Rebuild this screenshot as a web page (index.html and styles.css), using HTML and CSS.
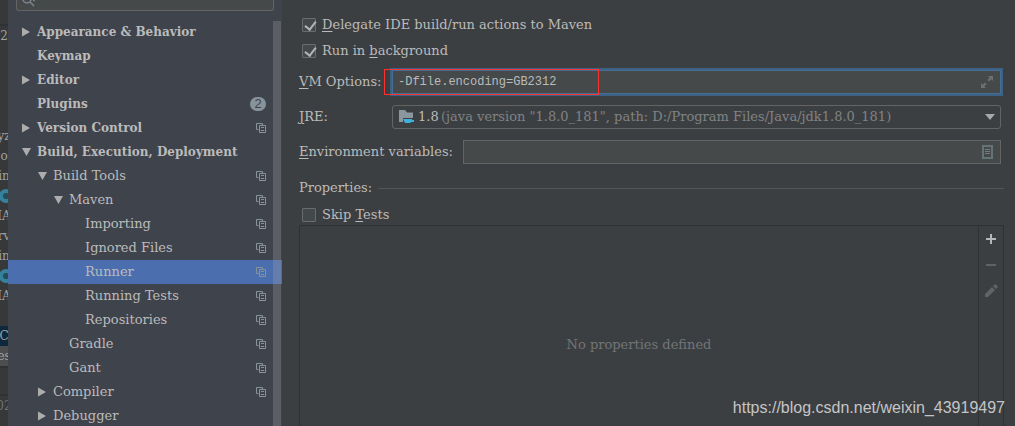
FILE: index.html
```html
<!DOCTYPE html>
<html lang="en">
<head>
<meta charset="utf-8">
<title>Settings</title>
<link rel="stylesheet" href="styles.css">
</head>
<body>
<svg class="defs" aria-hidden="true">
  <symbol id="copy" viewBox="0 0 10 10"><path d="M2.500 6.500h-2v-6h6v2M3.500 2.500h6v7h-6zM5 4.500h3M5 7.500h3" fill="none" stroke="currentColor"/></symbol>
  <symbol id="right" viewBox="0 0 11 10"><path d="M1 .5v9L9 5z" fill="currentColor"/></symbol>
  <symbol id="down" viewBox="0 0 11 10"><path d="M1 1h9L5.500 9z" fill="currentColor"/></symbol>
</svg>
<div class="window">
  <aside class="editor">
    <div class="line ruled">2</div>
    <div class="line"></div><div class="line"></div><div class="line"></div><div class="line"></div>
    <div class="line">yz</div>
    <div class="line">o</div>
    <div class="line">in</div>
    <div class="line"><span class="class-dot"></span></div>
    <div class="line">IA</div>
    <div class="line">rv</div>
    <div class="line">in</div>
    <div class="line"><span class="class-dot"></span></div>
    <div class="line">IA</div>
    <div class="line"></div>
    <div class="line current">C</div>
    <div class="line tab">es</div>
    <div class="status"></div>
    <div class="line clock">02</div>
  </aside>

  <nav class="sidebar">
    <div class="search">
      <svg class="search-icon" viewBox="0 0 14 14"><circle cx="5" cy="5" r="4" fill="none" stroke="currentColor" stroke-width="1.500"/><path d="M8 8l4 4M10.500 4.500h3l-1.500 2z" stroke="currentColor" stroke-width="1.500"/></svg>
      <input type="search" aria-label="Search settings">
    </div>
    <div class="tree-area">
    <ul class="tree">
      <li class="node top"><svg class="arrow"><use href="#right"/></svg><span>Appearance &amp; Behavior</span></li>
      <li class="node top"><span class="arrow"></span><span>Keymap</span></li>
      <li class="node top"><svg class="arrow"><use href="#right"/></svg><span>Editor</span></li>
      <li class="node top"><span class="arrow"></span><span>Plugins</span><b class="badge">2</b></li>
      <li class="node top"><svg class="arrow"><use href="#right"/></svg><span>Version Control</span><svg class="copy"><use href="#copy"/></svg></li>
      <li class="node top"><svg class="arrow"><use href="#down"/></svg><span>Build, Execution, Deployment</span></li>
      <li class="node level-1"><svg class="arrow"><use href="#down"/></svg><span>Build Tools</span><svg class="copy"><use href="#copy"/></svg></li>
      <li class="node level-2"><svg class="arrow"><use href="#down"/></svg><span>Maven</span><svg class="copy"><use href="#copy"/></svg></li>
      <li class="node level-3"><span class="arrow"></span><span>Importing</span><svg class="copy"><use href="#copy"/></svg></li>
      <li class="node level-3"><span class="arrow"></span><span>Ignored Files</span><svg class="copy"><use href="#copy"/></svg></li>
      <li class="node level-3 selected"><span class="arrow"></span><span>Runner</span><svg class="copy"><use href="#copy"/></svg></li>
      <li class="node level-3"><span class="arrow"></span><span>Running Tests</span><svg class="copy"><use href="#copy"/></svg></li>
      <li class="node level-3"><span class="arrow"></span><span>Repositories</span><svg class="copy"><use href="#copy"/></svg></li>
      <li class="node level-2"><span class="arrow"></span><span>Gradle</span><svg class="copy"><use href="#copy"/></svg></li>
      <li class="node level-2"><span class="arrow"></span><span>Gant</span><svg class="copy"><use href="#copy"/></svg></li>
      <li class="node level-1"><svg class="arrow"><use href="#right"/></svg><span>Compiler</span><svg class="copy"><use href="#copy"/></svg></li>
      <li class="node level-1"><svg class="arrow"><use href="#right"/></svg><span>Debugger</span></li>
    </ul>
    <div class="scrollbar"></div>
    </div>
  </nav>

  <main class="panel">
    <div class="checks">
      <label class="check"><input type="checkbox" checked><span><u>D</u>elegate IDE build/run actions to Maven</span></label>
      <label class="check"><input type="checkbox" checked><span>Run in <u>b</u>ackground</span></label>
    </div>

    <div class="field">
      <label class="name" for="vm"><u>V</u>M Options:</label>
      <div class="stack focus">
        <input id="vm" class="mono" type="text" value="-Dfile.encoding=GB2312" spellcheck="false">
        <svg class="end-icon" viewBox="0 0 12 12"><path d="M7 0h5v5l-1.700-1.700L8 5.600 6.400 4l2.300-2.300zM5 12H0V7l1.700 1.700L4 6.400 5.600 8l-2.300 2.300z" fill="#6b7072"/></svg>
        <div class="mark"></div>
      </div>
    </div>

    <div class="field">
      <label class="name" for="jre"><u>J</u>RE:</label>
      <div class="stack">
        <select id="jre"><option>1.8</option></select>
        <div class="jre-info">
          <svg class="folder" viewBox="0 0 16 14"><path d="M0 0h6l2 2.500h6V8H4v4H0z" fill="#8b979e"/><path d="M4 9h9v1h2v2h-2.500L11 13H6z" fill="#3fb0dc"/></svg>
          <span>(java version "1.8.0_181", path: D:/Program Files/Java/jdk1.8.0_181)</span>
        </div>
        <svg class="chevron" viewBox="0 0 10 6"><path d="M0 0h10L5 6z" fill="#a5a9ab"/></svg>
      </div>
    </div>

    <div class="field">
      <label class="name wide" for="env"><u>E</u>nvironment variables:</label>
      <div class="stack">
        <input id="env" type="text">
        <svg class="end-icon list" viewBox="0 0 12 14"><path d="M1 1h9v12H1z" fill="none" stroke="#657278" stroke-width="2"/><path d="M3 4.500h5M3 6.500h5M3 8.500h5" stroke="#737b7e"/></svg>
      </div>
    </div>

    <section class="properties">
      <h2>Properties:</h2>
      <label class="check"><input type="checkbox"><span>Skip <u>T</u>ests</span></label>
      <div class="grid">
        <p class="empty">No properties defined</p>
        <div class="tools">
          <button type="button" aria-label="Add"><svg viewBox="0 0 14 14"><path d="M7 2v10M2 7h10" stroke="#b4b7b9" stroke-width="2"/></svg></button>
          <button type="button" aria-label="Remove" disabled><svg viewBox="0 0 14 14"><path d="M2 7h10" stroke="#606263" stroke-width="2"/></svg></button>
          <button type="button" aria-label="Edit" disabled><svg viewBox="0 0 14 14"><path d="M1 10l7-7 3 3-7 7H1zM9 2l1.500-1.500h1.500L13.500 2v1.500L12 5z" fill="#606263"/></svg></button>
        </div>
      </div>
    </section>
    <div class="watermark">https://blog.csdn.net/weixin_43919497</div>
  </main>
</div>
</body>
</html>
```
FILE: styles.css
```css
* { box-sizing: border-box; }
body {
  margin: 0;
  background: #3c3f41;
  color: #bbbbbb;
  font: 13px/20px "DejaVu Serif", serif;
}
.defs { display: none; }
.window { display: flex; height: 100vh; overflow: hidden; }
svg { flex: none; display: block; }
u { text-underline-offset: 2px; }

/* Editor visible behind the dialog */
.editor {
  flex: none;
  width: 8px;
  padding-top: 24px;
  overflow: hidden;
  background: #373839;
  color: #a0a3a5;
}
.line { display: flex; align-items: center; justify-content: center; height: 20px; font-size: 12px; }
.ruled { height: 22px; border-top: 2px solid #303132; }
.class-dot { flex: none; width: 14px; height: 14px; margin-left: 4px; border: 4px solid #35809a; border-radius: 50%; background: #244b59; }
.current { background: #0d293e; }
.tab { background: #4b4d4e; }
.status { height: 30px; border-top: 2px solid #303132; border-bottom: 2px solid #303132; }
.clock { color: #707274; }

/* Settings tree */
.sidebar {
  flex: none;
  display: flex;
  flex-direction: column;
  width: 274px;
  background: #3f434c;
}
.search {
  display: flex;
  align-items: center;
  flex: none;
  gap: 4px;
  height: 11px;
  margin: 0 8px 9px;
  padding: 0 5px;
  border: 1px solid #646464;
  border-top: 0;
  border-radius: 0 0 3px 3px;
  background: #45494a;
  overflow: hidden;
}
.search-icon { width: 14px; height: 14px; margin-bottom: 8px; color: #7d868c; }
.search input { flex: 1; height: 8px; border: 0; background: none; outline: none; color: inherit; }
.tree-area { display: grid; min-height: 0; }
.tree, .scrollbar { grid-area: 1 / 1; }
.tree { margin: 0; padding: 0; list-style: none; }
.node { display: flex; align-items: center; gap: 5px; height: 24px; padding: 0 16px 0 13px; }
.top { font-size: 12px; font-weight: bold; }
.level-1 { padding-left: 29px; }
.level-2 { padding-left: 45px; }
.level-3 { padding-left: 61px; }
.arrow { flex: none; width: 11px; height: 10px; color: #adadad; }
.selected { background: #4b6eaf; }
.copy { width: 10px; height: 10px; margin-left: auto; color: #87939a; }
.badge {
  width: 16px;
  height: 14px;
  margin-left: auto;
  border-radius: 7px;
  background: #87939a;
  color: #3f434c;
  font: 13px/14px "Liberation Sans", sans-serif;
  text-align: center;
}
.scrollbar { justify-self: end; width: 8px; margin: 1px 1px 0 0; background: rgba(166, 166, 166, .28); }

/* Runner page */
.panel { flex: 1; display: flex; flex-direction: column; min-width: 0; padding: 15px 11px 0 17px; }
.checks { display: flex; flex-direction: column; gap: 6px; margin-bottom: 9px; }
.check { display: flex; align-items: center; gap: 6px; padding-left: 3px; }
.check input {
  appearance: none;
  flex: none;
  position: relative;
  width: 14px;
  height: 14px;
  margin: 0;
  border: 1px solid #6b6b6b;
  border-radius: 1px;
  background: #43494a;
}
.check input:checked::after {
  content: "";
  position: absolute;
  left: 4px;
  top: 0;
  width: 5px;
  height: 9px;
  border: solid #b4b4b4;
  border-width: 0 2px 2px 0;
  transform: rotate(38deg);
}
.field { display: flex; align-items: center; margin: 0 3px 11px 0; }
.name { flex: none; width: 93px; }
.wide { width: auto; min-width: 164px; }
.stack { flex: 1; display: grid; align-items: center; position: relative; min-width: 0; }
.stack > input, .stack > select, .stack > svg, .jre-info { grid-area: 1 / 1; }
.stack > input, select {
  appearance: none;
  width: 100%;
  height: 24px;
  margin: 0;
  padding: 0 24px 0 5px;
  border: 1px solid #646464;
  border-radius: 0;
  background: #45494a;
  color: #bbbbbb;
  font: inherit;
  outline: none;
}
.stack > .mono { font: 12px "Liberation Mono", monospace; }
.focus input { border-color: #466d94; box-shadow: 0 0 0 2px #3d6185; }
.stack > select { padding-left: 25px; border-radius: 3px; background: #3c3f41; }
.mark { position: absolute; z-index: 1; left: -8px; top: -1px; width: 215px; height: 26px; border: 1px solid #fa3232; pointer-events: none; }
.end-icon { justify-self: end; width: 12px; height: 12px; margin-right: 8px; }
.list { height: 14px; margin-right: 7px; }
.jre-info { display: flex; align-items: center; gap: 26px; padding-left: 7px; color: #808385; pointer-events: none; white-space: nowrap; overflow: hidden; }
.folder { width: 16px; height: 14px; }
.chevron { justify-self: end; width: 10px; height: 6px; margin-right: 6px; pointer-events: none; }

.properties { flex: 1; display: flex; flex-direction: column; margin-top: 3px; }
h2 { display: flex; align-items: center; gap: 6px; margin: 0 0 7px; font: inherit; }
h2::after { content: ""; flex: 1; height: 1px; background: #515557; }
.grid { flex: 1; display: flex; border: 1px solid #2f3132; border-bottom: 0; }
.empty { flex: 1; align-self: center; margin: 0; padding-top: 37px; text-align: center; color: #727577; }
.tools { display: flex; flex-direction: column; gap: 12px; width: 25px; padding: 6px 5px; border-left: 1px solid #2f3132; }
.tools button { width: 14px; height: 14px; padding: 0; border: 0; background: none; }
.tools svg { width: 14px; height: 14px; }
.watermark { position: absolute; right: 10px; bottom: 8px; font: 16px/20px "Liberation Sans", sans-serif; color: #c4c5c6; }
```
